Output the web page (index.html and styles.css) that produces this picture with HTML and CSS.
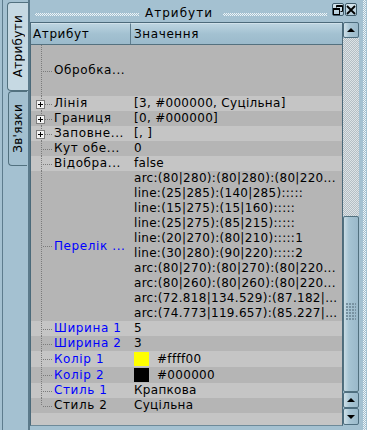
FILE: index.html
```html
<!DOCTYPE html>
<html lang="uk">
<head>
<meta charset="utf-8">
<title>Атрибути</title>
<link rel="stylesheet" href="styles.css">
</head>
<body>
<div class="app">
  <div class="tabs">
    <div class="tab active"><span class="tab-text">Атрибути</span></div>
    <div class="tab"><span class="tab-text">Зв'язки</span></div>
  </div>
  <div class="dock">
    <div class="titlebar">
      <div class="grip"></div>
      <span class="title">Атрибути</span>
      <div class="grip"></div>
      <div class="tbtns">
        <div class="tbtn">
          <svg width="10" height="10" viewBox="0 0 10 10"><path d="M3.5 0.5h6v6h-2M3.5 0.5v2" fill="none" stroke="#000" stroke-width="1"/><rect x="3.5" y="0.5" width="6" height="1.5" fill="#000"/><rect x="0.5" y="3.5" width="6" height="6" fill="none" stroke="#000"/><rect x="0.5" y="3.5" width="6" height="1.5" fill="#000"/></svg>
        </div>
        <div class="tbtn">
          <svg width="10" height="10" viewBox="0 0 10 10"><path d="M1 1L9 9M9 1L1 9" stroke="#000" stroke-width="1.8"/></svg>
        </div>
      </div>
    </div>
    <div class="main">
      <div class="table">
        <div class="thead">
          <div class="th th1">Атрибут</div>
          <div class="th th2">Значення</div>
        </div>
        <div class="rows">
          <div class="row dark h51"><div class="c1"><span>Обробка...</span></div><div class="c2"></div></div>
          <div class="row light"><div class="c1"><i class="exp"></i><span>Лінія</span></div><div class="c2">[3, #000000, Суцільна]</div></div>
          <div class="row dark"><div class="c1"><i class="exp"></i><span>Границя</span></div><div class="c2">[0, #000000]</div></div>
          <div class="row light"><div class="c1"><i class="exp"></i><span>Заповне...</span></div><div class="c2">[, ]</div></div>
          <div class="row dark"><div class="c1"><span>Кут обе...</span></div><div class="c2">0</div></div>
          <div class="row light"><div class="c1"><span>Відобра...</span></div><div class="c2">false</div></div>
          <div class="row dark multi">
            <div class="c1"><span class="blue">Перелік ...</span></div>
            <div class="c2 lines">
              <div>arc:(80|280):(80|280):(80|220...</div>
              <div>line:(25|285):(140|285):::::</div>
              <div>line:(15|275):(15|160):::::</div>
              <div>line:(25|275):(85|215):::::</div>
              <div>line:(20|270):(80|210):::::1</div>
              <div>line:(30|280):(90|220):::::2</div>
              <div>arc:(80|270):(80|270):(80|220...</div>
              <div>arc:(80|260):(80|260):(80|220...</div>
              <div>arc:(72.818|134.529):(87.182|...</div>
              <div>arc:(74.773|119.657):(85.227|...</div>
            </div>
          </div>
          <div class="row light"><div class="c1"><span class="blue">Ширина 1</span></div><div class="c2">5</div></div>
          <div class="row dark"><div class="c1"><span class="blue">Ширина 2</span></div><div class="c2">3</div></div>
          <div class="row light h16"><div class="c1"><span class="blue">Колір 1</span></div><div class="c2"><i class="swatch yellow"></i>#ffff00</div></div>
          <div class="row dark h16"><div class="c1"><span class="blue">Колір 2</span></div><div class="c2"><i class="swatch black"></i>#000000</div></div>
          <div class="row light"><div class="c1"><span class="blue">Стиль 1</span></div><div class="c2">Крапкова</div></div>
          <div class="row dark"><div class="c1 last"><span>Стиль 2</span></div><div class="c2">Суцільна</div></div>
          <div class="row light"><div class="c1 none"></div><div class="c2"></div></div>
        </div>
      </div>
      <div class="scrollbar">
        <div class="sbtn"><i class="arr up"></i></div>
        <div class="track"></div>
        <div class="thumb"><i class="thumb-grip"></i></div>
        <div class="sbtn"><i class="arr up"></i></div>
        <div class="sbtn last"><i class="arr down"></i></div>
      </div>
    </div>
  </div>
  <div class="edge"><div class="edge-dots"></div></div>
</div>
</body>
</html>
```

FILE: styles.css
```css
* { box-sizing: border-box; }
html, body { margin: 0; padding: 0; }
body {
  width: 367px;
  height: 430px;
  overflow: hidden;
  background: #a4c1d1;
  font-family: "DejaVu Sans", "Noto Sans", sans-serif;
  font-size: 12px;
  letter-spacing: 0.3px;
  color: #000;
}
.app { display: flex; height: 430px; }

/* left tabs */
.tabs {
  width: 28px;
  flex: none;
  padding-top: 2px;
  background: linear-gradient(to right, #a4c1d1 2px, #5d7c8d 2px, #5d7c8d 3px, #a4c1d1 3px);
  display: flex;
  flex-direction: column;
  align-items: flex-end;
}
.tab {
  display: flex;
  align-items: center;
  justify-content: center;
  border: 1px solid #52717f;
  border-right: none;
  border-radius: 4px 0 0 4px;
}
.tab.active {
  width: 21px;
  height: 89px;
  background: #c6d9e3;
}
.tab:not(.active) {
  width: 19px;
  height: 75px;
  margin-right: 1px;
  background: #a3c0d0;
}
.tab-text {
  writing-mode: vertical-rl;
  transform: rotate(180deg);
  white-space: nowrap;
  line-height: 14px;
}

/* dock */
.dock {
  flex: 1;
  display: flex;
  flex-direction: column;
  border-left: 2px solid #5b7a8b;
  min-width: 0;
}
.titlebar {
  height: 22px;
  flex: none;
  display: flex;
  align-items: center;
  padding-left: 5px;
  padding-top: 3px;
}
.grip {
  flex: 1;
  height: 3px;
  margin-top: 4px;
  background-image: conic-gradient(#eef4f7 25%, transparent 0 50%, #eef4f7 0 75%, transparent 0);
  background-size: 2px 2px;
}
.title { margin: 0 10px 0 6px; white-space: nowrap; line-height: 14px; letter-spacing: 1px; }
.tbtns { display: flex; gap: 1px; margin-left: 5px; margin-right: 3px; align-self: flex-start; }
.tbtn {
  width: 12px;
  height: 13px;
  border: 1px solid #3f5b6a;
  border-radius: 2px;
  background: linear-gradient(#d5e4ec, #b2cbd9);
  display: flex;
  align-items: center;
  justify-content: center;
}
.main {
  display: flex;
  height: 404px;
}

/* table */
.table {
  width: 313px;
  flex: none;
  border: 1px solid #4c6a7a;
  border-bottom-color: #6d8a99;
  display: flex;
  flex-direction: column;
  overflow: hidden;
  background: #c5c5c5;
}
.thead {
  height: 22px;
  flex: none;
  display: flex;
  border-bottom: 1px solid #54717f;
}
.th {
  display: flex;
  align-items: center;
  padding-left: 2px;
  background: linear-gradient(#bcd4e0, #a3c1d1 50%, #9bbacb);
  border-top: 1px solid #d0e1ea;
  white-space: nowrap;
  letter-spacing: 0.6px;
}
.th1 { width: 100px; border-right: 1px solid #5e7d8e; }
.th2 { flex: 1; padding-left: 3px; }

.rows { flex: 1; overflow: hidden; }
.row { display: flex; height: 15px; line-height: 15px; }
.row.dark { background: #b5b5b5; }
.row.light { background: #c5c5c5; }
.row.h51 { height: 51px; }
.row.h16 { height: 16px; }
.row.multi { height: 150px; }

.c1 {
  width: 100px;
  flex: none;
  position: relative;
  padding-left: 23px;
  display: flex;
  align-items: center;
  white-space: nowrap;
  overflow: hidden;
  letter-spacing: 0.6px;
}
.c1::before {
  content: "";
  position: absolute;
  left: 10px;
  top: 0;
  bottom: 0;
  width: 1px;
  background-image: linear-gradient(#7b7b7b 50%, transparent 50%);
  background-size: 1px 2px;
}
.c1::after {
  content: "";
  position: absolute;
  left: 11px;
  top: 50%;
  width: 10px;
  height: 1px;
  background-image: linear-gradient(to right, transparent 50%, #7b7b7b 50%);
  background-size: 2px 1px;
}
.c1.last::before { bottom: 50%; }
.c1.none::before, .c1.none::after { display: none; }
.exp {
  position: absolute;
  left: 5px;
  top: calc(50% - 4px);
  width: 9px;
  height: 9px;
  border: 1px solid #7d7d7d;
  background:
    linear-gradient(#000, #000) center / 5px 1px no-repeat,
    linear-gradient(#000, #000) center / 1px 5px no-repeat,
    #f4f4f4;
  z-index: 1;
}
.blue { color: #0000ff; }
.c2 {
  flex: 1;
  min-width: 0;
  padding-left: 3px;
  white-space: nowrap;
  overflow: hidden;
  display: flex;
  align-items: center;
}
.c2.lines { display: block; }
.c2.lines div { height: 15px; line-height: 15px; }
.swatch {
  width: 15px;
  height: 14px;
  margin-right: 8px;
  flex: none;
}
.swatch.yellow { background: #ffff00; }
.swatch.black { background: #000000; }

/* scrollbar */
.scrollbar {
  width: 16px;
  flex: none;
  display: flex;
  flex-direction: column;
  height: 403px;
}
.sbtn {
  height: 16px;
  flex: none;
  border: 1px solid #4e6e7f;
  border-radius: 2px;
  background: linear-gradient(to right, #cfe0e8, #a8c5d4 40%, #9bbacb);
  display: flex;
  align-items: center;
  justify-content: center;
}
.sbtn.last { height: 17px; }
.arr { width: 0; height: 0; border-left: 4px solid transparent; border-right: 4px solid transparent; }
.arr.up { border-bottom: 4px solid #000; }
.arr.down { border-top: 4px solid #000; }
.track {
  height: 178px;
  flex: none;
  background-image: conic-gradient(#dde3e6 25%, #b3bec4 0 50%, #dde3e6 0 75%, #b3bec4 0);
  background-size: 2px 2px;
}
.thumb {
  height: 176px;
  flex: none;
  border: 1px solid #52717f;
  border-radius: 2px;
  background: linear-gradient(to right, #c9dce5, #a6c4d3 35%, #9ab9ca);
  display: flex;
  align-items: center;
  justify-content: center;
}
.thumb-grip {
  width: 10px;
  height: 17px;
  margin-top: 14px;
  background-image: radial-gradient(circle at 1px 1px, #7892a1 1px, transparent 1.2px);
  background-size: 3px 3px;
}

/* right edge */
.edge {
  width: 7px;
  flex: none;
  padding-left: 3px;
}
.edge-dots {
  width: 3px;
  height: 100%;
  background-image: conic-gradient(#eef4f7 25%, transparent 0 50%, #eef4f7 0 75%, transparent 0);
  background-size: 2px 2px;
}
```
